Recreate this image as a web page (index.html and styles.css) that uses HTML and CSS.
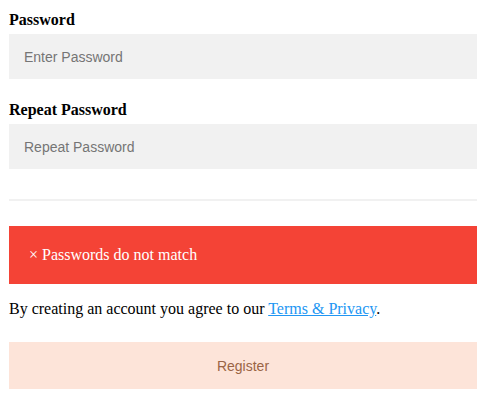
FILE: index.html
```html
<!DOCTYPE html>
<html>
<head>
<meta charset="utf-8">
<link rel="stylesheet" href="styles.css">
</head>
<body>
<form class="form">
  <label class="label" for="psw">Password</label>
  <input class="field" type="password" id="psw" placeholder="Enter Password">
  <label class="label" for="psw2">Repeat Password</label>
  <input class="field" type="password" id="psw2" placeholder="Repeat Password">
  <hr class="rule">
  <div class="alert">× Passwords do not match</div>
  <p class="terms">By creating an account you agree to our <a class="link" href="#">Terms &amp; Privacy</a>.</p>
  <button class="register" type="button">Register</button>
</form>
</body>
</html>
```
FILE: styles.css
```css
html, body {
  margin: 0;
  background: #ffffff;
}
.form {
  display: block;
  margin: 0;
  padding: 11px 10px 0 9px;
  font-family: "Liberation Serif", "Times New Roman", serif;
  font-size: 16px;
  color: #000;
}
.label {
  display: block;
  font-weight: bold;
  line-height: 18px;
  height: 18px;
}
.field {
  display: block;
  box-sizing: border-box;
  width: 100%;
  height: 45px;
  margin: 5px 0 22px 0;
  padding: 0 15px;
  border: none;
  outline: none;
  background: #f1f1f1;
  font-family: "Liberation Sans", Arial, sans-serif;
  font-size: 14px;
  color: #333;
}
.field::placeholder {
  color: #757575;
}
.rule {
  margin: 30px 0 25px 0;
  border: 1px solid #f1f1f1;
  height: 0;
}
.alert {
  background: #f44336;
  color: #ffffff;
  padding: 20px;
  line-height: 18px;
  margin-bottom: 15px;
}
.terms {
  margin: 16px 0 0 0;
  line-height: 18px;
}
.link {
  color: #2196f3;
  text-decoration: underline;
}
.register {
  display: block;
  box-sizing: border-box;
  width: 100%;
  height: 47px;
  margin: 24px 0 0 0;
  border: none;
  background: #fde4d9;
  color: #9a6445;
  font-family: "Liberation Sans", Arial, sans-serif;
  font-size: 14px;
}
```
